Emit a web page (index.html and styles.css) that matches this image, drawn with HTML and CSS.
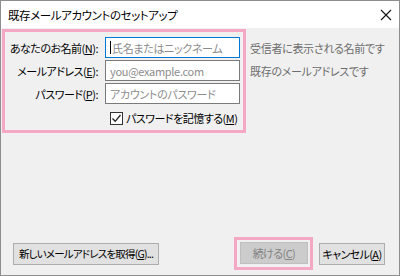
FILE: index.html
```html
<!DOCTYPE html>
<html lang="ja">
<head>
    <meta charset="UTF-8">
    <title>既存メールアカウントのセットアップ</title>
    <link rel="stylesheet" href="styles.css">
</head>
<body>
    <div class="window">
        <div class="titlebar">
            <span class="title">既存メールアカウントのセットアップ</span>
            <svg class="close" width="12" height="12" viewBox="0 0 12 12">
                <path d="M1 1L11 11M11 1L1 11" stroke="#111" stroke-width="1.1" fill="none"/>
            </svg>
        </div>
        <div class="content">
            <div class="form-area">
                <div class="highlight">
                    <div class="form-grid">
                        <label class="label">あなたのお名前(<u>N</u>):</label>
                        <div class="field focused">
                            <span class="caret"></span>
                            <input type="text" placeholder="氏名またはニックネーム">
                        </div>
                        <label class="label">メールアドレス(<u>E</u>):</label>
                        <div class="field">
                            <input type="text" placeholder="you@example.com">
                        </div>
                        <label class="label">パスワード(<u>P</u>):</label>
                        <div class="field">
                            <input type="password" placeholder="アカウントのパスワード">
                        </div>
                        <div></div>
                        <div class="remember">
                            <span class="checkbox">
                                <svg width="11" height="11" viewBox="0 0 11 11">
                                    <path d="M1.5 5.5L4.2 8.3L9.5 2" stroke="#222" stroke-width="1.3" fill="none"/>
                                </svg>
                            </span>
                            <span>パスワードを記憶する(<u>M</u>)</span>
                        </div>
                    </div>
                </div>
                <div class="hints">
                    <span class="hint">受信者に表示される名前です</span>
                    <span class="hint">既存のメールアドレスです</span>
                </div>
            </div>
            <div class="buttons">
                <button class="btn btn-wide">新しいメールアドレスを取得(<u>G</u>)...</button>
                <div class="highlight-btn">
                    <button class="btn btn-continue" disabled>続ける(<u>C</u>)</button>
                </div>
                <button class="btn btn-cancel">キャンセル(<u>A</u>)</button>
            </div>
        </div>
    </div>
</body>
</html>
```

FILE: styles.css
```css
* {
    box-sizing: border-box;
}
body {
    margin: 0;
    font-family: "Noto Sans CJK JP", sans-serif;
    font-size: 11px;
    letter-spacing: -0.5px;
    font-feature-settings: "palt";
    white-space: nowrap;
    color: #000;
}
.window {
    width: 400px;
    height: 276px;
    border: 1px solid #8e8e8e;
    display: flex;
    flex-direction: column;
    background-color: #f0f0f0;
}
.titlebar {
    height: 27px;
    background-color: #fff;
    display: flex;
    align-items: center;
    justify-content: space-between;
    padding: 0 7px 0 7px;
}
.title {
    font-size: 11.5px;
    letter-spacing: -0.4px;
}
.close {
    margin-top: 1px;
}
.content {
    flex: 1;
    display: flex;
    flex-direction: column;
    justify-content: space-between;
}
.form-area {
    display: flex;
    align-items: flex-start;
    margin: 1px 0 0 1px;
}
.highlight {
    border: 3px solid #f4a8c4;
    padding: 5px 3px 3px 0;
}
.form-grid {
    display: grid;
    grid-template-columns: 93px 135px;
    grid-auto-rows: 21px;
    column-gap: 7px;
    row-gap: 2px;
    align-items: center;
}
.label {
    text-align: right;
}
.field {
    position: relative;
    height: 21px;
    border: 1px solid #7a7a7a;
    background-color: #fff;
}
.field.focused {
    border-color: #0078d7;
}
.field input {
    width: 100%;
    height: 100%;
    border: none;
    outline: none;
    padding: 0 4px;
    font-family: inherit;
    font-size: 11px;
    letter-spacing: -0.3px;
    font-feature-settings: "palt";
    background: transparent;
}
.field input::placeholder {
    color: #8c8c8c;
}
.field.focused input {
    padding-left: 6px;
}
.caret {
    position: absolute;
    left: 4px;
    top: 3px;
    width: 1px;
    height: 13px;
    background-color: #000;
}
.remember {
    display: flex;
    align-items: center;
    gap: 3px;
    padding-left: 5px;
    padding-top: 3px;
}
.checkbox {
    width: 13px;
    height: 13px;
    border: 1px solid #333;
    background-color: #fff;
    display: flex;
    align-items: center;
    justify-content: center;
}
.hints {
    display: grid;
    grid-auto-rows: 21px;
    row-gap: 2px;
    align-items: center;
    padding: 8px 0 0 4px;
    color: #6d6d6d;
    letter-spacing: -0.3px;
}
.buttons {
    display: flex;
    align-items: center;
    padding: 0 14px 5px 12px;
}
.btn {
    height: 22px;
    border: 1px solid #adadad;
    background-color: #e1e1e1;
    font-family: inherit;
    font-size: 11px;
    letter-spacing: -0.6px;
    font-feature-settings: "palt";
    white-space: nowrap;
    color: #000;
    padding: 0;
}
.btn-wide {
    width: 146px;
    font-size: 10.5px;
    letter-spacing: -0.8px;
}
.highlight-btn {
    margin-left: auto;
    border: 3px solid #f4a8c4;
    padding: 2px 2px 3px 3px;
    display: flex;
}
.btn-continue {
    width: 68px;
    background-color: #cccccc;
    border-color: #bfbfbf;
    color: #838383;
}
.btn-cancel {
    width: 66px;
    margin-left: 6px;
}
```
